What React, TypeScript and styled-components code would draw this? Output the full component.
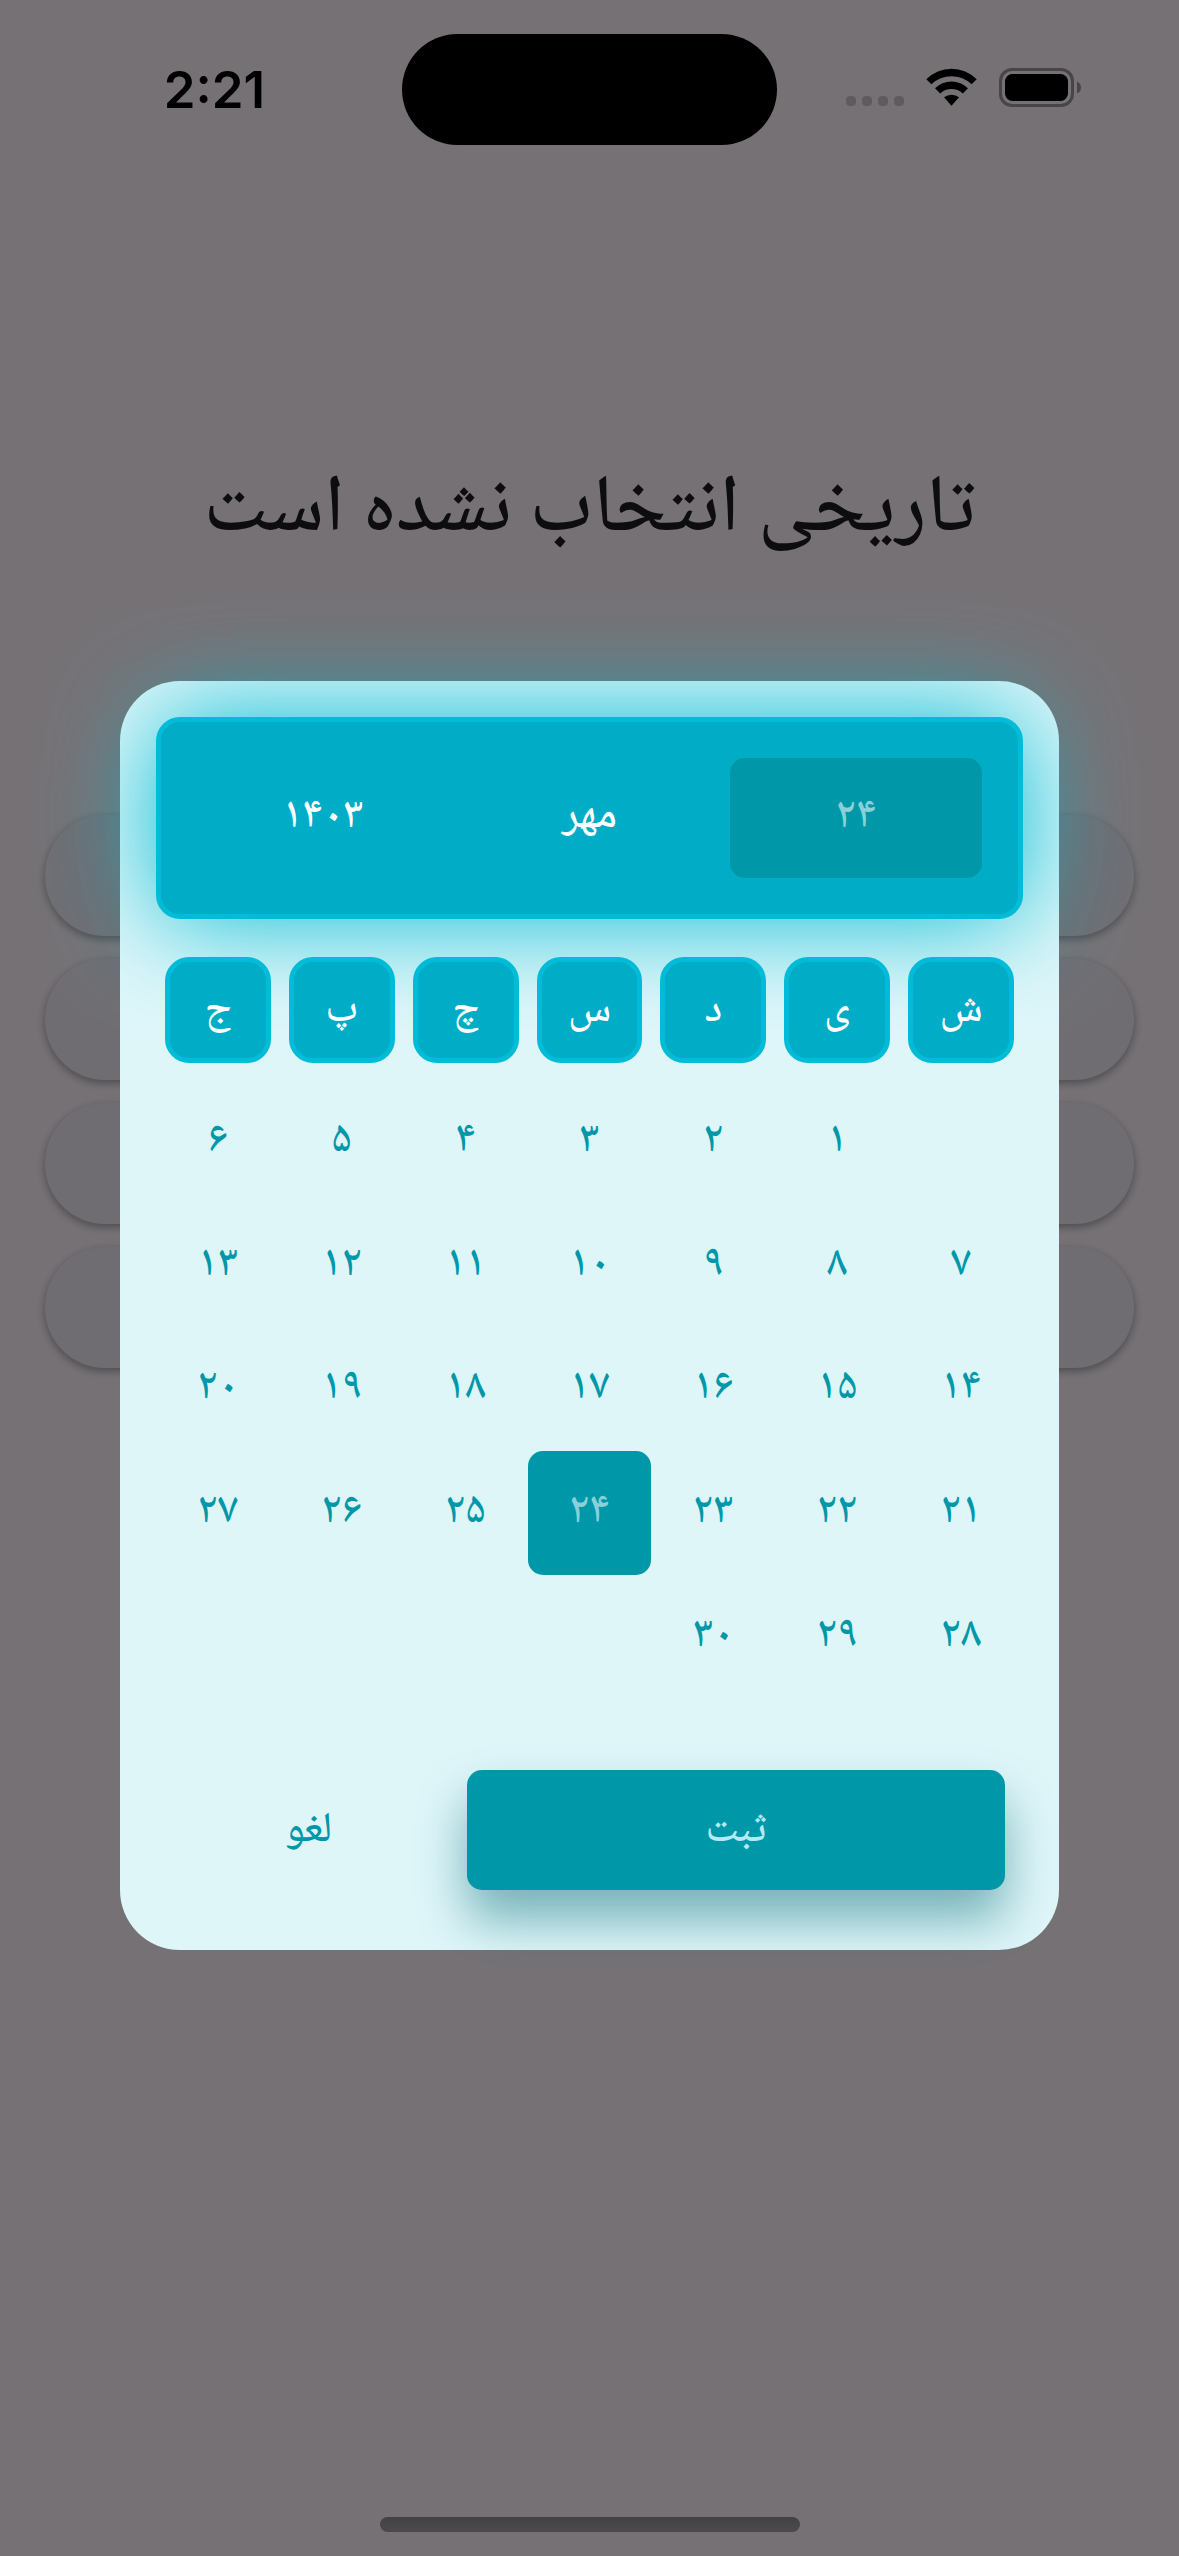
import React, { useState } from 'react';
import styled, { createGlobalStyle, css } from 'styled-components';

const color = {
  page: '#fff7fe',
  ink: '#1d1b20',
  surface: '#f1eef8',
  dialog: '#dff6f9',
  glow: '#00bcd4',
  edge: '#00bcd8',
  panel: '#00acc6',
  teal: '#0098a9',
  pale: '#b2ebf2',
  faded: '#8bcfd8',
};

const GlobalStyle = createGlobalStyle`
  *, *::before, *::after { box-sizing: border-box; }
  body {
    margin: 0;
    background: ${color.page};
    font-family: "Noto Naskh Arabic", "DejaVu Sans", sans-serif;
    font-weight: 500;
  }
  button {
    margin: 0;
    padding: 0;
    border: 0;
    background: none;
    font: inherit;
    color: inherit;
    cursor: pointer;
  }
`;

const Screen = styled.div`
  min-height: 100vh;
  padding-top: 440px;
  background: ${color.page};
`;

const Heading = styled.h1`
  margin: 0;
  text-align: center;
  font-size: 81px;
  font-weight: 500;
  line-height: 144px;
  color: ${color.ink};
`;

const Actions = styled.div`
  display: grid;
  gap: 23px;
  padding: 231px 45px 0;
`;

const ActionButton = styled.button`
  height: 121px;
  border-radius: 60px;
  background: ${color.surface};
  box-shadow: 0 3px 8px rgba(0, 0, 0, 0.35);
`;

const StatusBar = styled.header`
  position: fixed;
  inset: 0 0 auto;
  z-index: 3;
  display: grid;
  grid-template-columns: 1fr 375px 1fr;
  align-items: center;
  justify-items: center;
  padding: 34px 27px 0;
`;

const Clock = styled.time`
  font-family: Inter, "Liberation Sans", sans-serif;
  font-size: 51px;
  font-weight: 600;
  line-height: 64px;
  color: #000;
`;

const Island = styled.div`
  width: 375px;
  height: 111px;
  border-radius: 56px;
  background: #000;
`;

const StatusIcons = styled.svg`
  display: block;
  width: 237px;
  height: 43px;
`;

const HomeBar = styled.div`
  position: fixed;
  inset: auto 0 24px;
  z-index: 3;
  width: 420px;
  height: 15px;
  margin: 0 auto;
  border-radius: 8px;
  background: linear-gradient(#434243, #4c4a4c);
`;

const Scrim = styled.div`
  position: fixed;
  inset: 0;
  z-index: 2;
  display: flex;
  align-items: center;
  padding: 177px 120px 102px;
  background: rgba(0, 0, 0, 0.54);
`;

const Dialog = styled.section`
  flex: 1;
  padding: 36px 36px 60px;
  border-radius: 60px;
  background: ${color.dialog};
  font-size: 44px;
  line-height: 60px;
`;

const DateHeader = styled.div`
  display: grid;
  grid-template-columns: repeat(3, 1fr);
  gap: 15px;
  padding: 36px;
  border: 5px solid ${color.edge};
  border-radius: 24px;
  background: ${color.panel};
  box-shadow: 0 0 105px ${color.glow};
  color: #fff;
`;

const HeaderPart = styled.button<{ $active?: boolean }>`
  height: 120px;
  border-radius: 15px;
  ${(p) =>
    p.$active &&
    css`
      background: ${color.teal};
      color: ${color.faded};
    `}
`;

const Week = styled.div`
  position: relative;
  display: grid;
  grid-template-columns: repeat(7, 1fr);
`;

const WeekNames = styled(Week)`
  padding: 29px 0 8px;
`;

const WeekName = styled.div`
  display: grid;
  place-items: center;
  aspect-ratio: 1;
  margin: 9px;
  padding-top: 4px;
  border: 5px solid ${color.edge};
  border-radius: 24px;
  background: ${color.panel};
  font-size: 42px;
  color: #fff;
`;

const Day = styled.button<{ $selected?: boolean }>`
  aspect-ratio: 1;
  border-radius: 15px;
  color: ${(p) => (p.$selected ? color.faded : color.teal)};
  background: ${(p) => (p.$selected ? color.teal : 'none')};
`;

const Blank = styled.span`
  aspect-ratio: 1;
`;

const Footer = styled.footer`
  display: grid;
  grid-template-columns: 2fr 1fr;
  gap: 24px;
  padding: 71px 18px 0;
  font-size: 42px;
  color: ${color.teal};
`;

const FooterButton = styled.button<{ $primary?: boolean }>`
  height: 120px;
  padding-top: 4px;
  border-radius: 15px;
  ${(p) =>
    p.$primary &&
    css`
      background: ${color.teal};
      color: ${color.pale};
      box-shadow: 0 30px 50px rgba(0, 104, 112, 0.48);
    `}
`;

const weekNames = ['ش', 'ی', 'د', 'س', 'چ', 'پ', 'ج'];
const days = Array.from({ length: 30 }, (_, i) => i + 1);
const actions = ['انتخاب تاریخ', 'انتخاب ماه', 'انتخاب سال', 'انتخاب بازه'];

const toPersian = (n: number) =>
  String(n).replace(/\d/g, (d) => '۰۱۲۳۴۵۶۷۸۹'[Number(d)]);

function Indicators() {
  return (
    <StatusIcons viewBox="0 0 237 43" aria-hidden="true">
      <g fill="#5f5b5f">
        {[0, 16, 32, 48].map((x) => (
          <rect key={x} x={x} y="28" width="10" height="10" rx="4" />
        ))}
      </g>
      <g>
        <path d="M80.300 11.200 A35.500 35.500 0 0 1 130.700 11.200 L125.600 16.300 A29 29 0 0 0 85.400 16.300 Z" />
        <path d="M89 20.200 A23.500 23.500 0 0 1 122 20.200 L116.800 25.400 A16.500 16.500 0 0 0 94.200 25.400 Z" />
        <path d="M98 29.300 A12 12 0 0 1 113 29.300 L105.500 37.800 Z" />
      </g>
      <rect x="154.500" y="1.500" width="72" height="36" rx="11.500" fill="none" stroke="#474548" strokeWidth="3" />
      <rect x="159" y="6" width="63" height="27" rx="7.500" />
      <path d="M231 13.500 Q235 15.500 235 19.500 Q235 23.500 231 25.500 Z" fill="#474548" />
    </StatusIcons>
  );
}

export default function App() {
  const [selected, setSelected] = useState(24);

  return (
    <>
      <GlobalStyle />
      <StatusBar>
        <Clock>2:21</Clock>
        <Island />
        <Indicators />
      </StatusBar>

      <Screen dir="rtl">
        <Heading>تاریخی انتخاب نشده است</Heading>
        <Actions>
          {actions.map((name) => (
            <ActionButton key={name} aria-label={name} />
          ))}
        </Actions>
      </Screen>

      <Scrim dir="rtl">
        <Dialog role="dialog" aria-modal="true">
          <DateHeader>
            <HeaderPart $active>{toPersian(selected)}</HeaderPart>
            <HeaderPart>مهر</HeaderPart>
            <HeaderPart>{toPersian(1403)}</HeaderPart>
          </DateHeader>
          <WeekNames>
            {weekNames.map((name) => (
              <WeekName key={name}>{name}</WeekName>
            ))}
          </WeekNames>
          <Week>
            <Blank />
            {days.map((day) => (
              <Day key={day} $selected={day === selected} onClick={() => setSelected(day)}>
                {toPersian(day)}
              </Day>
            ))}
          </Week>
          <Footer>
            <FooterButton $primary>ثبت</FooterButton>
            <FooterButton>لغو</FooterButton>
          </Footer>
        </Dialog>
      </Scrim>

      <HomeBar />
    </>
  );
}
